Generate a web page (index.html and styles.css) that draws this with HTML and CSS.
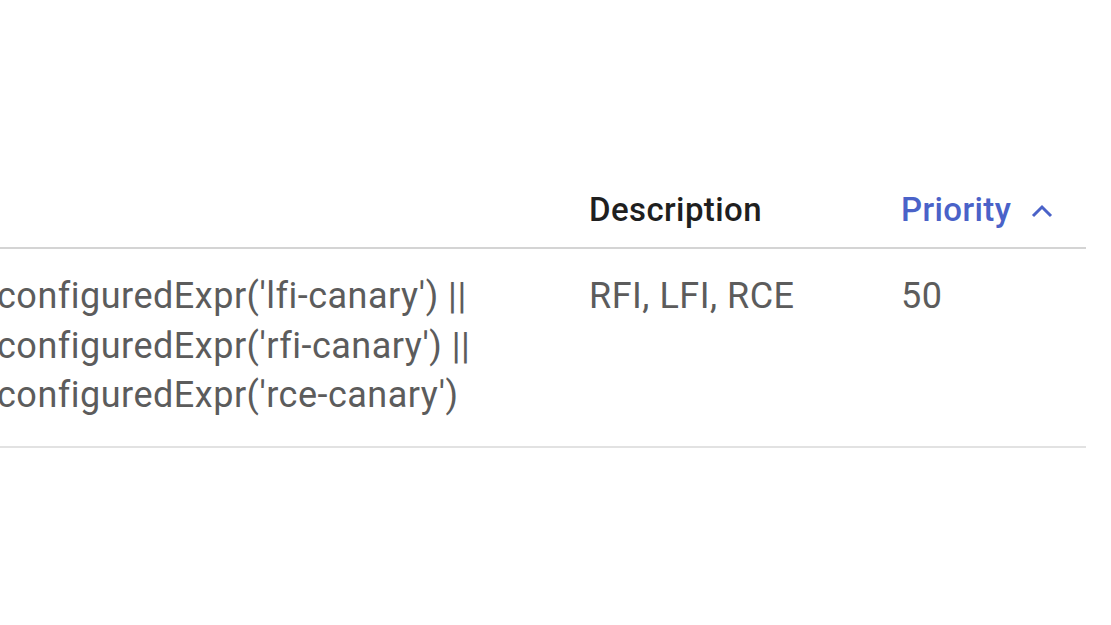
FILE: index.html
```html
<!DOCTYPE html>
<html>
<head>
<meta charset="utf-8">
<link rel="stylesheet" href="styles.css">
</head>
<body>
<div class="table">
  <div class="row head">
    <div class="cell c1"></div>
    <div class="cell c2">Description</div>
    <div class="cell c3 sorted">Priority
      <svg class="chev" width="22" height="14" viewBox="0 0 22 14"><polyline points="2,12 11,3 20,12" fill="none" stroke="currentColor" stroke-width="3"/></svg>
    </div>
  </div>
  <div class="row body">
    <div class="cell c1">configuredExpr('lfi-canary') ||<br>configuredExpr('rfi-canary') ||<br>configuredExpr('rce-canary')</div>
    <div class="cell c2">RFI, LFI, RCE</div>
    <div class="cell c3">50</div>
  </div>
</div>
</body>
</html>
```
FILE: styles.css
```css
html, body {
  margin: 0;
  padding: 0;
  background: #ffffff;
}
body {
  font-family: Roboto, "Liberation Sans", sans-serif;
  font-size: 33px;
  overflow: hidden;
}
.table {
  margin-top: 185px;
  margin-left: -3px;
  width: 1089px;
}
.row {
  display: grid;
  grid-template-columns: 592px 312px 185px;
}
.head {
  height: 62px;
  border-bottom: 2px solid #d4d4d4;
  color: #1f1f1f;
  font-weight: 500;
  line-height: 50px;
  letter-spacing: 0.4px;
}
.head .cell {
  display: flex;
  align-items: flex-start;
}
.sorted {
  color: #4a62c8;
  gap: 20px;
}
.chev {
  margin-top: 19px;
}
.body {
  color: #5c5c5c;
  font-size: 36px;
  letter-spacing: 0.5px;
  line-height: 49.5px;
  padding-top: 23px;
  padding-bottom: 25px;
  border-bottom: 2px solid #e2e2e2;
}
```
